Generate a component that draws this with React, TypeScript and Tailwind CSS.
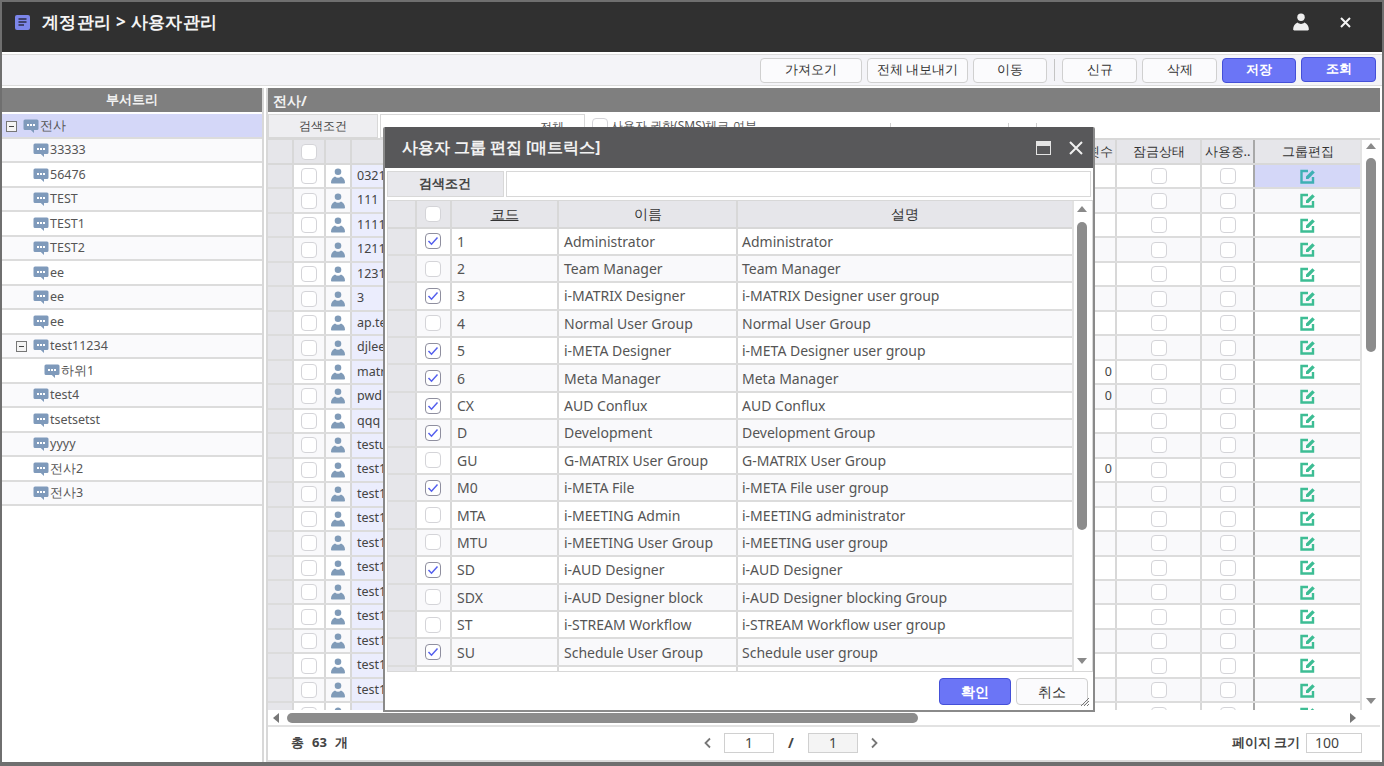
import React from "react";

const Bubble = () => (
  <svg width="16" height="15" viewBox="0 0 16 15" className="shrink-0">
    <path d="M2 0.5h12a1.5 1.5 0 0 1 1.5 1.5v7.500a1.500 1.500 0 0 1-1.500 1.500h-3v3l-3.200-3H2A1.500 1.500 0 0 1 .5 9.500V2A1.500 1.500 0 0 1 2 .5z" fill="#7f9abb" />
    <rect x="4" y="5" width="2" height="2" fill="#fff" />
    <rect x="7" y="5" width="2" height="2" fill="#fff" />
    <rect x="10" y="5" width="2" height="2" fill="#fff" />
  </svg>
);

const Person = ({ color = "#809bb8", size = 16 }: { color?: string; size?: number }) => (
  <svg width={size} height={size} viewBox="0 0 16 16">
    <circle cx="8" cy="3.800" r="3.300" fill={color} />
    <path d="M1 14.500c0-3 1.800-5 4-6 .9.900 1.900 1.300 3 1.300s2.100-.4 3-1.300c2.200 1 4 3 4 6 0 .6-.5 1-1 1H2c-.5 0-1-.4-1-1z" fill={color} />
  </svg>
);

const Edit = ({ color = "#3dbd94" }: { color?: string }) => (
  <svg width="16" height="15" viewBox="0 0 16 15">
    <path d="M8 2H1.500v11.500H13V8" fill="none" stroke={color} strokeWidth="2.400" />
    <path d="M6 10V7.600L12.400 1.200l2.400 2.400L8.400 10z" fill={color} />
  </svg>
);

const Check = ({ on = false }: { on?: boolean }) => (
  <span className={`flex h-[16px] w-[16px] items-center justify-center rounded-[4px] border bg-white ${on ? "border-[#8f8f9f]" : "border-[#d4d4d8]"}`}>
    {on && (
      <svg width="12" height="12" viewBox="0 0 12 12">
        <path d="M1.500 6l3 3.200 6-6.700" fill="none" stroke="#5560ee" strokeWidth="1.500" />
      </svg>
    )}
  </span>
);

const Minus = () => (
  <span className="flex h-[11px] w-[11px] shrink-0 items-center justify-center border border-[#777] bg-[#f4f4f4]">
    <span className="h-px w-[5px] bg-[#444]" />
  </span>
);

const Tri = ({ dir }: { dir: "up" | "down" | "left" | "right" }) => (
  <svg width="10" height="10" viewBox="0 0 10 10" className="shrink-0">
    {dir === "up" && <path d="M0 8h10L5 2z" fill="#8a8a8a" />}
    {dir === "down" && <path d="M0 2h10L5 8z" fill="#8a8a8a" />}
    {dir === "left" && <path d="M8 0v10L2 5z" fill="#777" />}
    {dir === "right" && <path d="M2 0v10l6-5z" fill="#777" />}
  </svg>
);

const Btn = ({ label, w, primary }: { label: string; w: string; primary?: boolean }) => (
  <button
    className={`${w} h-[25px] rounded-[4px] border text-[13px] ${
      primary ? "border-[#4450d8] bg-[#6b75f6] font-semibold text-white" : "border-[#d0d0d0] bg-[#fbfbfd] font-medium text-[#333]"
    }`}
  >
    {label}
  </button>
);

const tree: { t: string; ind: string; sel?: boolean; box?: boolean }[] = [
  { t: "전사", ind: "pl-[4px]", sel: true, box: true },
  { t: "33333", ind: "pl-[31px]" },
  { t: "56476", ind: "pl-[31px]" },
  { t: "TEST", ind: "pl-[31px]" },
  { t: "TEST1", ind: "pl-[31px]" },
  { t: "TEST2", ind: "pl-[31px]" },
  { t: "ee", ind: "pl-[31px]" },
  { t: "ee", ind: "pl-[31px]" },
  { t: "ee", ind: "pl-[31px]" },
  { t: "test11234", ind: "pl-[14px]", box: true },
  { t: "하위1", ind: "pl-[42px]" },
  { t: "test4", ind: "pl-[31px]" },
  { t: "tsetsetst", ind: "pl-[31px]" },
  { t: "yyyy", ind: "pl-[31px]" },
  { t: "전사2", ind: "pl-[31px]" },
  { t: "전사3", ind: "pl-[31px]" },
];

const ids = ["0321", "111", "1111", "1211", "1231", "3", "ap.test", "djlee", "matrix", "pwd", "qqq", "testuser", "test1", "test1", "test1", "test1", "test1", "test1", "test1", "test1", "test1", "test1", ""];
const counts: Record<number, string> = { 8: "0", 9: "0", 12: "0" };

const groups: [string, string, string, boolean][] = [
  ["1", "Administrator", "Administrator", true],
  ["2", "Team Manager", "Team Manager", false],
  ["3", "i-MATRIX Designer", "i-MATRIX Designer user group", true],
  ["4", "Normal User Group", "Normal User Group", false],
  ["5", "i-META Designer", "i-META Designer user group", true],
  ["6", "Meta Manager", "Meta Manager", true],
  ["CX", "AUD Conflux", "AUD Conflux", true],
  ["D", "Development", "Development Group", true],
  ["GU", "G-MATRIX User Group", "G-MATRIX User Group", false],
  ["M0", "i-META File", "i-META File user group", true],
  ["MTA", "i-MEETING Admin", "i-MEETING administrator", false],
  ["MTU", "i-MEETING User Group", "i-MEETING user group", false],
  ["SD", "i-AUD Designer", "i-AUD Designer", true],
  ["SDX", "i-AUD Designer block", "i-AUD Designer blocking Group", false],
  ["ST", "i-STREAM Workflow", "i-STREAM Workflow user group", false],
  ["SU", "Schedule User Group", "Schedule user group", true],
  ["", "", "", false],
];

const Dialog = () => (
  <div className="absolute left-[381px] top-[125px] z-10 flex h-[585px] w-[712px] flex-col overflow-hidden rounded-t-[2px] border-b-2 border-l-2 border-r-2 border-[#8a8a8a] bg-white">
    <div className="-mx-[2px] flex h-[41px] shrink-0 items-center justify-between bg-[#58585a] pl-[19px] pr-[12px]">
      <span className="text-[15.500px] font-bold text-[#f2f2f2]">사용자 그룹 편집 [매트릭스]</span>
      <div className="flex items-center gap-[18px]">
        <span className="flex h-[14px] w-[15px] flex-col justify-end border border-[#e4e4e4] border-t-[3px] bg-[#e4e4e4]">
          <span className="h-[8px] w-full bg-[#58585a]" />
        </span>
        <svg width="14" height="14" viewBox="0 0 14 14">
          <path d="M1 1l12 12M13 1L1 13" stroke="#f0f0f0" strokeWidth="2" />
        </svg>
      </div>
    </div>
    <div className="flex shrink-0 gap-[2px] px-[2px] pb-[3px] pt-[3px]">
      <div className="flex h-[26px] w-[117px] items-center justify-center border border-[#d8d8d8] bg-[#e8e8ec] text-[13px] font-bold text-[#444]">검색조건</div>
      <div className="h-[26px] w-[587px] border border-[#d8d8d8] bg-white" />
    </div>
    <div className="relative ml-[2px] flex h-[472px] w-[706px] shrink-0 flex-col overflow-hidden border border-[#d8d8d8]">
      <div className="flex h-[27.500px] shrink-0 border-b-2 border-[#d8d8d8] text-[14px] text-[#333]">
        <div className="w-[29px] border-r-2 border-[#d8d8d8] bg-[#e6e6ea]" />
        <div className="flex w-[35px] items-center justify-center border-r-2 border-[#d8d8d8] bg-[#e6e6ea] pr-[1px]"><Check /></div>
        <div className="flex w-[107px] items-center justify-center border-r-2 border-[#d8d8d8] bg-[#e6e6ea] font-medium underline">코드</div>
        <div className="flex w-[179px] items-center justify-center border-r-2 border-[#d8d8d8] bg-[#e6e6ea]">이름</div>
        <div className="flex w-[334px] items-center justify-center bg-[#e6e6ea]">설명</div>
      </div>
      <div className="flex flex-col pr-[20px]">
        {groups.map((g, i) => (
          <div key={i} className={`flex h-[27.400px] shrink-0 border-b-2 border-[#dcdcdc] text-[14px] text-[#555] ${i % 2 ? "bg-[#f9f9fb]" : "bg-white"}`}>
            <div className="w-[29px] border-r-2 border-[#d8d8d8] bg-[#e6e6ea]" />
            <div className="flex w-[35px] items-center justify-center border-r-2 border-[#d8d8d8] pr-[1px]">{g[0] && <Check on={g[3]} />}</div>
            <div className="flex w-[107px] items-center border-r-2 border-[#d8d8d8] pl-[5px]">{g[0]}</div>
            <div className="flex w-[179px] items-center border-r-2 border-[#d8d8d8] pl-[5px]">{g[1]}</div>
            <div className="flex flex-1 items-center pl-[4px]">{g[2]}</div>
          </div>
        ))}
      </div>
      <div className="absolute bottom-0 right-0 top-0 flex w-[20px] flex-col items-center border-l-2 border-[#e2e2e2] bg-white pb-[5px] pr-[2px] pt-[3px]">
        <Tri dir="up" />
        <div className="mt-[8px] h-[308px] w-[10px] rounded-full bg-[#8c8c8c]" />
        <div className="flex-1" />
        <Tri dir="down" />
      </div>
    </div>
    <div className="relative flex flex-1 items-center justify-end gap-[5px] pr-[5px] pt-[1px]">
      <Btn label="확인" w="w-[72px] !h-[27px] !text-[14px]" primary />
      <Btn label="취소" w="w-[72px] !h-[27px] !text-[14px]" />
      <svg width="10" height="10" viewBox="0 0 10 10" className="absolute bottom-[3px] right-[3px]">
        <path d="M9 1L1 9M9 4L4 9M9 7L7 9" stroke="#777" strokeWidth="1" />
      </svg>
    </div>
  </div>
);

export default function App() {
  return (
    <div className="relative flex h-[766px] w-[1384px] flex-col overflow-hidden border-b-[4px] border-l-2 border-r-2 border-t-2 border-[#6f6f6f] bg-white font-['Noto_Sans_CJK_KR',sans-serif]">
      <header className="flex h-[50px] shrink-0 items-center justify-between bg-[#303030] pb-[10px] pl-[13px] pr-[31px]">
        <div className="flex items-center gap-[12px]">
          <svg width="15" height="15" viewBox="0 0 15 15">
            <rect width="15" height="15" rx="2" fill="#7c86ea" />
            <path d="M3.500 4h8M3.500 7h8M3.500 10h5.500" stroke="#2c2c44" strokeWidth="1.500" />
          </svg>
          <span className="text-[17px] font-bold tracking-[0.300px] text-[#f4f4f4]">계정관리&nbsp;&gt;&nbsp;사용자관리</span>
        </div>
        <div className="flex items-center gap-[30px]">
          <Person color="#eeeeee" size={18} />
          <svg width="11" height="11" viewBox="0 0 11 11">
            <path d="M1 1l9 9M10 1l-9 9" stroke="#f4f4f4" strokeWidth="2" />
          </svg>
        </div>
      </header>
      <div className="mt-[2px] flex h-[32px] shrink-0 items-center justify-end border-y border-[#dcdcdc] bg-[#f4f4f8] pr-[6px]">
        <div className="flex items-center gap-[5px]">
          <Btn label="가져오기" w="w-[102px]" />
          <Btn label="전체 내보내기" w="w-[101px]" />
          <Btn label="이동" w="w-[74px]" />
          <span className="mx-[2px] h-[22px] w-px bg-[#c4c4c4]" />
          <Btn label="신규" w="w-[75px]" />
          <Btn label="삭제" w="w-[75px]" />
          <Btn label="저장" w="w-[74px]" primary />
          <Btn label="조회" w="w-[75px] -translate-y-px" primary />
        </div>
      </div>
      <div className="mt-[2px] flex min-h-0 flex-1">
        <aside className="flex w-[262px] shrink-0 flex-col border-r-2 border-[#d8d8d8]">
          <div className="flex h-[24px] shrink-0 items-center justify-center bg-[#7f7f7f] text-[13px] font-bold text-[#f2f2f2]">부서트리</div>
          <div className="flex flex-col pt-[2px]">
            {tree.map((n, i) => (
              <div key={i} className={`flex h-[24.500px] shrink-0 items-center border-b-2 border-[#dcdcdc] pt-[2px] text-[12.500px] text-[#555] ${n.ind} ${n.sel ? "bg-[#d4d7f8]" : i % 2 ? "bg-[#fafafc]" : "bg-white"}`}>
                {n.box && <span className="mr-[6px]"><Minus /></span>}
                <Bubble />
                <span className="ml-[1px]">{n.t}</span>
              </div>
            ))}
          </div>
        </aside>
        <main className="ml-[2px] mr-[2px] flex min-w-0 flex-1 flex-col border-l-2 border-[#d8d8d8]">
          <div className="flex h-[24px] shrink-0 items-center bg-[#7f7f7f] pl-[5px] text-[14px] font-bold text-[#f2f2f2]">전사/</div>
          <div className="flex h-[26px] shrink-0 items-start overflow-hidden pt-[2px] text-[12px] text-[#555]">
            <div className="flex h-[24px] w-[110px] items-center justify-center border border-[#d8d8d8] bg-[#eeeef1] font-medium text-[#444]">검색조건</div>
            <div className="ml-[2px] flex h-[24px] w-[205px] justify-end border border-[#d8d8d8] pr-[20px] pt-[3px]">전체</div>
            <div className="ml-[7px] flex w-[298px] shrink-0 items-center gap-[3px] pt-[3px]"><Check /><span>사용자 권한(SMS)체크 여부</span></div>
            <span className="mt-[9px] h-[10px] w-px bg-[#d0d0d0]" />
            <span className="ml-[117px] mt-[9px] h-[10px] w-px bg-[#d0d0d0]" />
            <span className="ml-[27px] mt-[9px] h-[10px] w-px bg-[#d0d0d0]" />
          </div>
          <div className="relative flex h-[572px] shrink-0 flex-col overflow-hidden border-t-2 border-[#d8d8d8] pr-[20px]">
            <div className="flex h-[25px] shrink-0 border-b-2 border-[#d8d8d8] bg-[#e6e6ea] text-[13px] text-[#333]">
              <div className="w-[26px] border-r-2 border-[#d8d8d8]" />
              <div className="flex w-[32px] items-center justify-center border-r-2 border-[#d8d8d8]"><Check /></div>
              <div className="w-[26px] border-r-2 border-[#d8d8d8]" />
              <div className="flex flex-1 items-center justify-end border-r-2 border-[#d8d8d8] pr-[2px]">실패횟수</div>
              <div className="flex w-[85px] items-center justify-center border-r-2 border-[#d8d8d8]">잠금상태</div>
              <div className="flex w-[53px] items-center justify-center border-r-2 border-[#a8a8a8]">사용중..</div>
              <div className="flex w-[105px] items-center justify-center">그룹편집</div>
            </div>
            {ids.map((id, i) => (
              <div key={i} className={`flex h-[24.480px] shrink-0 border-b-2 border-[#dcdcdc] text-[12.500px] text-[#444] ${i % 2 ? "bg-[#f9f9fb]" : "bg-white"}`}>
                <div className="w-[26px] border-r-2 border-[#d8d8d8] bg-[#e6e6ea]" />
                <div className="flex w-[32px] items-center justify-center border-r-2 border-[#d8d8d8]"><Check /></div>
                <div className="flex w-[26px] items-center justify-center border-r-2 border-[#d8d8d8]"><Person /></div>
                <div className="flex w-[120px] items-center border-r-2 border-[#d8d8d8] bg-[#ebedfd] pl-[5px]">{id}</div>
                <div className="flex flex-1 items-center justify-end border-r-2 border-[#d8d8d8] pr-[3px]">{counts[i]}</div>
                <div className="flex w-[85px] items-center justify-center border-r-2 border-[#d8d8d8]"><Check /></div>
                <div className="flex w-[53px] items-center justify-center border-r-2 border-[#a8a8a8]"><Check /></div>
                <div className={`flex w-[105px] items-center justify-center ${i === 0 ? "bg-[#d4d7f8]" : ""}`}><Edit color={i === 0 ? "#3fb0b4" : "#3dbd94"} /></div>
              </div>
            ))}
            <div className="absolute bottom-0 right-0 top-0 flex w-[20px] flex-col items-center border-l-2 border-[#e2e2e2] bg-white pb-[4px] pt-[1px]">
              <Tri dir="up" />
              <div className="mt-[7px] h-[194px] w-[10px] rounded-full bg-[#8c8c8c]" />
              <div className="flex-1" />
              <Tri dir="down" />
            </div>
          </div>
          <div className="flex h-[17px] shrink-0 items-center border-b-2 border-[#e2e2e2] pl-[3px] pr-[22px]">
            <Tri dir="left" />
            <div className="ml-[6px] h-[10px] w-[631px] rounded-full bg-[#8c8c8c]" />
            <div className="flex-1" />
            <Tri dir="right" />
          </div>
          <div className="relative flex flex-1 items-center justify-between border-b-2 border-[#dcdcdc] pb-[2px] pl-[23px] pr-[18px] text-[13px] text-[#444]">
            <span className="flex gap-[8px] font-bold"><span>총</span><span>63</span><span>개</span></span>
            <div className="flex items-center">
              <span className="font-bold">페이지 크기</span>
              <span className="ml-[6px] flex h-[20px] w-[56px] items-center border border-[#d0d0d0] pl-[8px] text-[14px]">100</span>
            </div>
            <div className="absolute left-[434px] top-[5px] flex items-center text-[14px]">
              <svg width="12" height="12" viewBox="0 0 12 12"><path d="M8 1.500L3.500 6 8 10.500" fill="none" stroke="#777" strokeWidth="1.800" /></svg>
              <span className="ml-[10px] flex h-[20px] w-[50px] items-center justify-center border border-[#d0d0d0] bg-white">1</span>
              <span className="mx-[14px] w-[6px] font-bold">/</span>
              <span className="flex h-[20px] w-[50px] items-center justify-center border border-[#d0d0d0] bg-[#f4f4f4]">1</span>
              <svg className="ml-[10px]" width="12" height="12" viewBox="0 0 12 12"><path d="M4 1.500L8.500 6 4 10.500" fill="none" stroke="#777" strokeWidth="1.800" /></svg>
            </div>
          </div>
        </main>
      </div>
      <Dialog />
    </div>
  );
}
